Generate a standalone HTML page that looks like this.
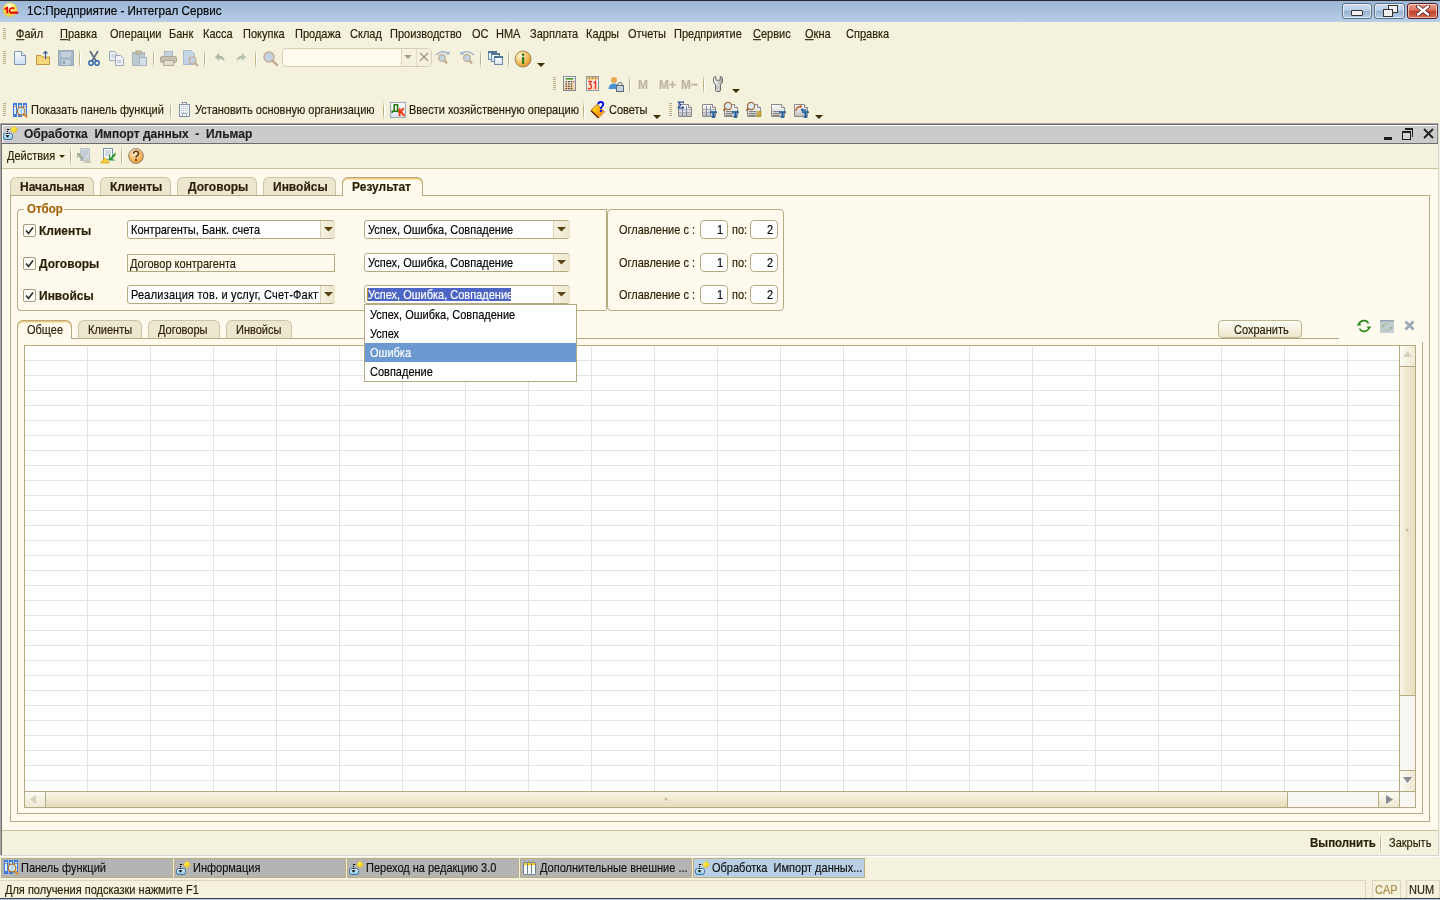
<!DOCTYPE html>
<html><head><meta charset="utf-8"><style>
html,body{margin:0;padding:0;width:1440px;height:900px;overflow:hidden;background:#f4f1dc}
body>div,body>svg{position:absolute;box-sizing:content-box}
body>svg{will-change:transform}
.t{font-family:"Liberation Sans",sans-serif;line-height:14px;white-space:pre;will-change:transform;-webkit-text-stroke:0.15px}
u{text-decoration:underline;text-underline-offset:1px}
</style></head><body>
<div style="left:0px;top:0px;width:1440px;height:900px;background:#f4f1dc"></div>
<div style="left:0px;top:0px;width:1440px;height:1px;background:#2a2a2a"></div>
<div style="left:0px;top:1px;width:1440px;height:21px;background:linear-gradient(#9cb6d6,#b7cee8)"></div>
<svg style="position:absolute;left:2px;top:2px" width="17" height="17" viewBox="0 0 17 17"><defs><radialGradient id="lg" cx="0.45" cy="0.25" r="0.8"><stop offset="0" stop-color="#ffffff"/><stop offset="0.45" stop-color="#f8ec60"/><stop offset="0.75" stop-color="#f0d040"/><stop offset="1" stop-color="#f4d8a0"/></radialGradient></defs><circle cx="8" cy="7.8" r="7.1" fill="url(#lg)" stroke="#d8b860" stroke-width="0.6"/><path d="M2.3 6.5 L4.6 4.8 H6.2 V11.3 H4.3 V7.2 L2.3 7.9 Z" fill="#e80000"/><path d="M12.2 6.8 A2.7 2.7 0 1 0 9.3 11.2" stroke="#e80000" stroke-width="1.7" fill="none"/><rect x="8.8" y="9.6" width="7.5" height="2.1" fill="#e80000"/></svg>
<div class="t" style="left:27px;top:3.95px;font-size:11.7px;font-weight:normal;color:#000;transform-origin:0 11.05px;transform:scaleY(1.1);">1C:Предприятие - Интеграл Сервис</div>
<div style="left:1342px;top:3px;width:28px;height:14px;border:1px solid #5f7189;border-radius:3px;background:linear-gradient(#c9dbef 0%,#bcd0e8 45%,#97b2cf 50%,#b3cbe5 100%);box-shadow:inset 0 0 0 1px rgba(255,255,255,0.6)"></div>
<div style="left:1374px;top:3px;width:29px;height:14px;border:1px solid #5f7189;border-radius:3px;background:linear-gradient(#c9dbef 0%,#bcd0e8 45%,#97b2cf 50%,#b3cbe5 100%);box-shadow:inset 0 0 0 1px rgba(255,255,255,0.6)"></div>
<div style="left:1407px;top:3px;width:29px;height:14px;border:1px solid #5a1a1a;border-radius:3px;background:linear-gradient(#e8a08c 0%,#d9735a 45%,#c0422a 50%,#cf6a50 100%);box-shadow:inset 0 0 0 1px rgba(255,255,255,0.6)"></div>
<div style="left:1351px;top:10px;width:10px;height:4px;background:#f0f0f0;border:1px solid #333;border-radius:1px"></div>
<div style="left:1388px;top:5px;width:8px;height:6px;background:#f0f0f0;border:1px solid #333"></div>
<div style="left:1383px;top:9px;width:8px;height:6px;background:#f0f0f0;border:1px solid #333"></div>
<svg style="position:absolute;left:1416px;top:5px" width="14" height="11" viewBox="0 0 14 11"><path d="M2 1.5 L12 9.5 M12 1.5 L2 9.5" stroke="#5a2020" stroke-width="4" stroke-linecap="round"/><path d="M2 1.5 L12 9.5 M12 1.5 L2 9.5" stroke="#fff" stroke-width="2.4" stroke-linecap="round"/></svg>
<div style="left:3px;top:28px;width:3px;height:1px;background:#b8ae88"></div>
<div style="left:3px;top:30px;width:3px;height:1px;background:#b8ae88"></div>
<div style="left:3px;top:32px;width:3px;height:1px;background:#b8ae88"></div>
<div style="left:3px;top:34px;width:3px;height:1px;background:#b8ae88"></div>
<div style="left:3px;top:36px;width:3px;height:1px;background:#b8ae88"></div>
<div style="left:3px;top:38px;width:3px;height:1px;background:#b8ae88"></div>
<div class="t" style="left:15.5px;top:27.19px;font-size:11px;font-weight:normal;color:#2b2006;transform-origin:0 10.81px;transform:scaleY(1.1);"><u>Ф</u>айл</div>
<div class="t" style="left:59.5px;top:27.19px;font-size:11px;font-weight:normal;color:#2b2006;transform-origin:0 10.81px;transform:scaleY(1.1);"><u>П</u>равка</div>
<div class="t" style="left:109.5px;top:27.19px;font-size:11px;font-weight:normal;color:#2b2006;transform-origin:0 10.81px;transform:scaleY(1.1);">Операции</div>
<div class="t" style="left:168.5px;top:27.19px;font-size:11px;font-weight:normal;color:#2b2006;transform-origin:0 10.81px;transform:scaleY(1.1);">Банк</div>
<div class="t" style="left:202.5px;top:27.19px;font-size:11px;font-weight:normal;color:#2b2006;transform-origin:0 10.81px;transform:scaleY(1.1);">Касса</div>
<div class="t" style="left:242.5px;top:27.19px;font-size:11px;font-weight:normal;color:#2b2006;transform-origin:0 10.81px;transform:scaleY(1.1);">Покупка</div>
<div class="t" style="left:294.5px;top:27.19px;font-size:11px;font-weight:normal;color:#2b2006;transform-origin:0 10.81px;transform:scaleY(1.1);">Продажа</div>
<div class="t" style="left:349.5px;top:27.19px;font-size:11px;font-weight:normal;color:#2b2006;transform-origin:0 10.81px;transform:scaleY(1.1);">Склад</div>
<div class="t" style="left:389.5px;top:27.19px;font-size:11px;font-weight:normal;color:#2b2006;transform-origin:0 10.81px;transform:scaleY(1.1);">Производство</div>
<div class="t" style="left:471.5px;top:27.19px;font-size:11px;font-weight:normal;color:#2b2006;transform-origin:0 10.81px;transform:scaleY(1.1);">ОС</div>
<div class="t" style="left:495.5px;top:27.19px;font-size:11px;font-weight:normal;color:#2b2006;transform-origin:0 10.81px;transform:scaleY(1.1);">НМА</div>
<div class="t" style="left:529.5px;top:27.19px;font-size:11px;font-weight:normal;color:#2b2006;transform-origin:0 10.81px;transform:scaleY(1.1);">Зарплата</div>
<div class="t" style="left:585.5px;top:27.19px;font-size:11px;font-weight:normal;color:#2b2006;transform-origin:0 10.81px;transform:scaleY(1.1);">Кадры</div>
<div class="t" style="left:627.5px;top:27.19px;font-size:11px;font-weight:normal;color:#2b2006;transform-origin:0 10.81px;transform:scaleY(1.1);">Отчеты</div>
<div class="t" style="left:673.5px;top:27.19px;font-size:11px;font-weight:normal;color:#2b2006;transform-origin:0 10.81px;transform:scaleY(1.1);">Предприятие</div>
<div class="t" style="left:752.5px;top:27.19px;font-size:11px;font-weight:normal;color:#2b2006;transform-origin:0 10.81px;transform:scaleY(1.1);"><u>С</u>ервис</div>
<div class="t" style="left:804.5px;top:27.19px;font-size:11px;font-weight:normal;color:#2b2006;transform-origin:0 10.81px;transform:scaleY(1.1);"><u>О</u>кна</div>
<div class="t" style="left:845.5px;top:27.19px;font-size:11px;font-weight:normal;color:#2b2006;transform-origin:0 10.81px;transform:scaleY(1.1);">Сп<u>р</u>авка</div>
<div style="left:3px;top:51px;width:3px;height:1px;background:#b8ae88"></div>
<div style="left:3px;top:53px;width:3px;height:1px;background:#b8ae88"></div>
<div style="left:3px;top:55px;width:3px;height:1px;background:#b8ae88"></div>
<div style="left:3px;top:57px;width:3px;height:1px;background:#b8ae88"></div>
<div style="left:3px;top:59px;width:3px;height:1px;background:#b8ae88"></div>
<div style="left:3px;top:61px;width:3px;height:1px;background:#b8ae88"></div>
<div style="left:3px;top:63px;width:3px;height:1px;background:#b8ae88"></div>
<svg style="position:absolute;left:12px;top:50px" width="16" height="16" viewBox="0 0 16 16"><defs><linearGradient id="ndg" x1="0" y1="0" x2="0.3" y2="1"><stop offset="0" stop-color="#ffffff"/><stop offset="1" stop-color="#cfe0f0"/></linearGradient></defs><path d="M2.5 1.5 H9.5 L13.5 5.5 V14.5 H2.5 Z" fill="url(#ndg)" stroke="#7d97b4"/><path d="M9.5 1.5 V5.5 H13.5" fill="#e4eef8" stroke="#7d97b4"/></svg>
<svg style="position:absolute;left:35px;top:50px" width="16" height="16" viewBox="0 0 16 16"><path d="M1.5 5.5 H6 L7.5 7 H14.5 V14.5 H1.5 Z" fill="#f3d77a" stroke="#c09a3a"/><path d="M10.5 9 V1.5 M8.5 3.5 L10.5 1.5 L12.5 3.5" stroke="#3f6590" stroke-width="1.2" fill="none"/></svg>
<svg style="position:absolute;left:58px;top:50px" width="16" height="16" viewBox="0 0 16 16"><rect x="0.5" y="0.5" width="15" height="15" fill="#a8b8c8" stroke="#9aaabb"/><rect x="3" y="2" width="10" height="5" fill="#c4d0dc"/><rect x="4" y="10" width="8" height="5" fill="#c4d0dc"/><rect x="5" y="11" width="2" height="3" fill="#8e9eb0"/></svg>
<div style="left:79px;top:50px;width:1px;height:18px;background:linear-gradient(rgba(190,178,130,0.1),#bdb287 30%,#bdb287 70%,rgba(190,178,130,0.1))"></div>
<div style="left:80px;top:50px;width:1px;height:18px;background:linear-gradient(rgba(255,255,255,0.2),#ffffff 30%,#ffffff 70%,rgba(255,255,255,0.2))"></div>
<svg style="position:absolute;left:87px;top:50px" width="14" height="16" viewBox="0 0 14 16"><path d="M3 1 L9 11 M11 1 L5 11" stroke="#5a6a7a" stroke-width="1.6"/><circle cx="4" cy="13" r="2.2" fill="none" stroke="#2a62a8" stroke-width="1.4"/><circle cx="10" cy="13" r="2.2" fill="none" stroke="#2a62a8" stroke-width="1.4"/></svg>
<svg style="position:absolute;left:108px;top:50px" width="17" height="16" viewBox="0 0 17 16"><path d="M1.5 1.5 H6.5 L8.5 3.5 V10.5 H1.5 Z" fill="#eef2f8" stroke="#98a8ba"/><path d="M3 5 H7 M3 7 H7" stroke="#b0bccb"/><path d="M7.5 5.5 H12.5 L15.5 8.5 V15.5 H7.5 Z" fill="#f2f6fa" stroke="#98a8ba"/><path d="M9 10.5 H13.5 M9 12.5 H13.5" stroke="#a8b6c6"/></svg>
<svg style="position:absolute;left:131px;top:50px" width="17" height="16" viewBox="0 0 17 16"><rect x="1.5" y="2.5" width="12" height="13" fill="#bcc8d2" stroke="#a7b4c0"/><rect x="5" y="1" width="5" height="3" fill="#c9c4a8" stroke="#a9a488"/><rect x="8.5" y="7.5" width="7" height="8" fill="#d4dee8" stroke="#a7b4c0"/></svg>
<div style="left:153px;top:50px;width:1px;height:18px;background:linear-gradient(rgba(190,178,130,0.1),#bdb287 30%,#bdb287 70%,rgba(190,178,130,0.1))"></div>
<div style="left:154px;top:50px;width:1px;height:18px;background:linear-gradient(rgba(255,255,255,0.2),#ffffff 30%,#ffffff 70%,rgba(255,255,255,0.2))"></div>
<svg style="position:absolute;left:160px;top:50px" width="17" height="16" viewBox="0 0 17 16"><rect x="4.5" y="1.5" width="8" height="5" fill="#c5d3e0" stroke="#a9b6c2"/><rect x="0.5" y="6.5" width="16" height="6" rx="1.5" fill="#c9bfae" stroke="#b0a692"/><rect x="3.5" y="10.5" width="10" height="5" fill="#e2ddd2" stroke="#b0a692"/></svg>
<svg style="position:absolute;left:183px;top:50px" width="16" height="17" viewBox="0 0 16 17"><path d="M0.5 0.5 H8 L11.5 4 V14.5 H0.5 Z" fill="#c5d5e5" stroke="#a9bccf"/><circle cx="9.5" cy="10.5" r="3.5" fill="#c0d0e0" stroke="#c7a88c" stroke-width="1.2"/><path d="M12 13 L15 16" stroke="#c7a88c" stroke-width="2"/></svg>
<div style="left:204px;top:50px;width:1px;height:18px;background:linear-gradient(rgba(190,178,130,0.1),#bdb287 30%,#bdb287 70%,rgba(190,178,130,0.1))"></div>
<div style="left:205px;top:50px;width:1px;height:18px;background:linear-gradient(rgba(255,255,255,0.2),#ffffff 30%,#ffffff 70%,rgba(255,255,255,0.2))"></div>
<svg style="position:absolute;left:214px;top:52px" width="12" height="11" viewBox="0 0 12 11"><path d="M5 1 L1 5 L5 9 V6.5 Q9 6.5 10.5 10 Q10.5 3.5 5 3.5 Z" fill="#a9b7a3"/></svg>
<svg style="position:absolute;left:235px;top:52px" width="12" height="11" viewBox="0 0 12 11"><path d="M7 1 L11 5 L7 9 V6.5 Q3 6.5 1.5 10 Q1.5 3.5 7 3.5 Z" fill="#b6c2b0"/></svg>
<div style="left:255px;top:50px;width:1px;height:18px;background:linear-gradient(rgba(190,178,130,0.1),#bdb287 30%,#bdb287 70%,rgba(190,178,130,0.1))"></div>
<div style="left:256px;top:50px;width:1px;height:18px;background:linear-gradient(rgba(255,255,255,0.2),#ffffff 30%,#ffffff 70%,rgba(255,255,255,0.2))"></div>
<svg style="position:absolute;left:262px;top:50px" width="17" height="17" viewBox="0 0 17 17"><circle cx="7" cy="7" r="5" fill="#c2d2e4" stroke="#c4aa90" stroke-width="1.3"/><path d="M10.5 10.5 L15 15" stroke="#c2a88e" stroke-width="2.4" stroke-linecap="round"/></svg>
<div style="left:282px;top:48px;width:148px;height:17px;border:1px solid #d6cfb0;border-radius:4px;background:#fffbee"></div>
<div style="left:401px;top:49px;width:30px;height:17px;background:#f4f1dc;border-radius:0 3px 3px 0"></div>
<div style="left:401px;top:49px;width:1px;height:17px;background:#ddd6b8"></div>
<div style="left:416px;top:49px;width:1px;height:17px;background:#e4dec4"></div>
<svg style="position:absolute;left:404px;top:55px" width="8" height="5" viewBox="0 0 8 5"><path d="M0 0 H8 L4 4 Z" fill="#a49f8c"/></svg>
<svg style="position:absolute;left:419px;top:52px" width="10" height="10" viewBox="0 0 10 10"><path d="M1 1 L9 9 M9 1 L1 9" stroke="#9b9684" stroke-width="1.3"/></svg>
<svg style="position:absolute;left:435px;top:50px" width="17" height="15" viewBox="0 0 17 15"><path d="M1 5 Q7 -1 14 4" stroke="#9fb5cf" stroke-width="1.6" fill="none"/><path d="M11 5 L15 4 L14 1" fill="#9fb5cf"/><circle cx="7" cy="8" r="3.4" fill="#c4d2e2" stroke="#c4aa90" stroke-width="1.1"/><path d="M9.5 10.5 L12 13.5" stroke="#c2a88e" stroke-width="2"/></svg>
<svg style="position:absolute;left:458px;top:50px" width="17" height="15" viewBox="0 0 17 15"><path d="M3 4 Q10 -1 16 5" stroke="#9fb5cf" stroke-width="1.6" fill="none"/><path d="M6 5 L2 4 L3 1" fill="#9fb5cf"/><circle cx="9" cy="8" r="3.4" fill="#c4d2e2" stroke="#c4aa90" stroke-width="1.1"/><path d="M11.5 10.5 L14 13.5" stroke="#c2a88e" stroke-width="2"/></svg>
<div style="left:480px;top:50px;width:1px;height:18px;background:linear-gradient(rgba(190,178,130,0.1),#bdb287 30%,#bdb287 70%,rgba(190,178,130,0.1))"></div>
<div style="left:481px;top:50px;width:1px;height:18px;background:linear-gradient(rgba(255,255,255,0.2),#ffffff 30%,#ffffff 70%,rgba(255,255,255,0.2))"></div>
<svg style="position:absolute;left:488px;top:50px" width="16" height="16" viewBox="0 0 16 16"><defs><linearGradient id="wng" x1="0" y1="0" x2="0" y2="1"><stop offset="0" stop-color="#ffffff"/><stop offset="1" stop-color="#d4e2f0"/></linearGradient></defs><rect x="0.5" y="1.5" width="8" height="8" fill="url(#wng)" stroke="#6a8aa8"/><rect x="0" y="1" width="9" height="2" fill="#4f7699"/><rect x="3.5" y="3.5" width="8" height="8" fill="url(#wng)" stroke="#6a8aa8"/><rect x="3" y="3" width="9" height="2" fill="#4f7699"/><rect x="6.5" y="6.5" width="8" height="8" fill="url(#wng)" stroke="#6a8aa8"/><rect x="6" y="6" width="9" height="2" fill="#4f7699"/></svg>
<div style="left:508px;top:50px;width:1px;height:18px;background:linear-gradient(rgba(190,178,130,0.1),#bdb287 30%,#bdb287 70%,rgba(190,178,130,0.1))"></div>
<div style="left:509px;top:50px;width:1px;height:18px;background:linear-gradient(rgba(255,255,255,0.2),#ffffff 30%,#ffffff 70%,rgba(255,255,255,0.2))"></div>
<svg style="position:absolute;left:514px;top:50px" width="18" height="18" viewBox="0 0 18 18"><defs><radialGradient id="ig" cx="0.35" cy="0.3" r="0.75"><stop offset="0" stop-color="#fff6d8"/><stop offset="0.7" stop-color="#f2b34c"/><stop offset="1" stop-color="#d98a20"/></radialGradient></defs><circle cx="9" cy="9" r="8" fill="url(#ig)" stroke="#8a7a5a" stroke-width="0.8"/><rect x="8" y="7" width="2.2" height="7" fill="#2f7a1f"/><circle cx="9.1" cy="4.8" r="1.3" fill="#2f7a1f"/></svg>
<svg style="position:absolute;left:537px;top:63px" width="8" height="5" viewBox="0 0 8 5"><path d="M0 0 H8 L4 4 Z" fill="#3d2e06"/></svg>
<div style="left:553px;top:77px;width:3px;height:1px;background:#b8ae88"></div>
<div style="left:553px;top:79px;width:3px;height:1px;background:#b8ae88"></div>
<div style="left:553px;top:81px;width:3px;height:1px;background:#b8ae88"></div>
<div style="left:553px;top:83px;width:3px;height:1px;background:#b8ae88"></div>
<div style="left:553px;top:85px;width:3px;height:1px;background:#b8ae88"></div>
<div style="left:553px;top:87px;width:3px;height:1px;background:#b8ae88"></div>
<div style="left:553px;top:89px;width:3px;height:1px;background:#b8ae88"></div>
<svg style="position:absolute;left:563px;top:76px" width="13" height="15" viewBox="0 0 13 15"><defs><linearGradient id="cg" x1="0" y1="0" x2="0" y2="1"><stop offset="0" stop-color="#ffffff"/><stop offset="1" stop-color="#f7c890"/></linearGradient></defs><rect x="0.5" y="0.5" width="12" height="14" fill="url(#cg)" stroke="#7c8c9c"/><rect x="2.5" y="2" width="8" height="1.6" fill="#3f9a2a"/><rect x="2.5" y="5.0" width="1.6" height="1.2" fill="#3a3a3a"/><rect x="2.5" y="7.3" width="1.6" height="1.2" fill="#3a3a3a"/><rect x="2.5" y="9.6" width="1.6" height="1.2" fill="#3a3a3a"/><rect x="2.5" y="11.899999999999999" width="1.6" height="1.2" fill="#3a3a3a"/><rect x="5.1" y="5.0" width="1.6" height="1.2" fill="#3a3a3a"/><rect x="5.1" y="7.3" width="1.6" height="1.2" fill="#3a3a3a"/><rect x="5.1" y="9.6" width="1.6" height="1.2" fill="#3a3a3a"/><rect x="5.1" y="11.899999999999999" width="1.6" height="1.2" fill="#3a3a3a"/><rect x="7.7" y="5.0" width="1.6" height="1.2" fill="#3a3a3a"/><rect x="7.7" y="7.3" width="1.6" height="1.2" fill="#3a3a3a"/><rect x="7.7" y="9.6" width="1.6" height="1.2" fill="#3a3a3a"/><rect x="7.7" y="11.899999999999999" width="1.6" height="1.2" fill="#3a3a3a"/><rect x="10.2" y="5" width="1" height="1.5" fill="#e02020"/></svg>
<svg style="position:absolute;left:586px;top:76px" width="13" height="15" viewBox="0 0 13 15"><defs><linearGradient id="clg" x1="0" y1="0" x2="0" y2="1"><stop offset="0" stop-color="#ffffff"/><stop offset="1" stop-color="#fbd8b8"/></linearGradient></defs><rect x="0.5" y="0.5" width="12" height="14" fill="url(#clg)" stroke="#8a98a6"/><rect x="1" y="1" width="11" height="2.6" fill="#f2c070"/><path d="M3 2.3 H4 M6 2.3 H7 M9 2.3 H10" stroke="#7a4a20"/><path d="M2.2 5.5 H5.3 L3.8 8 Q5.5 8.3 5.5 10.3 Q5.5 12.8 3.6 12.8 Q2.4 12.8 2 12" stroke="#e83020" stroke-width="1.3" fill="none"/><path d="M7.6 7 L9.5 5.5 V13" stroke="#e83020" stroke-width="1.4" fill="none"/></svg>
<svg style="position:absolute;left:608px;top:76px" width="16" height="16" viewBox="0 0 16 16"><circle cx="6" cy="4" r="3" fill="#e8a850"/><path d="M0.5 13 Q1 7.5 6 7.5 Q10 7.5 10 11 V13 Z" fill="#4a90d0"/><rect x="8.5" y="9.5" width="7" height="6" fill="#c8d2dc" stroke="#5a6a7a"/><path d="M10 9.5 V7.5 Q12 5 14 7.5 V9.5" stroke="#5a6a7a" fill="none"/></svg>
<div style="left:629px;top:76px;width:1px;height:18px;background:linear-gradient(rgba(190,178,130,0.1),#bdb287 30%,#bdb287 70%,rgba(190,178,130,0.1))"></div>
<div style="left:630px;top:76px;width:1px;height:18px;background:linear-gradient(rgba(255,255,255,0.2),#ffffff 30%,#ffffff 70%,rgba(255,255,255,0.2))"></div>
<div class="t" style="left:638px;top:77.84px;font-size:12px;font-weight:bold;color:#bdb4a3;transform-origin:0 11.16px;transform:scaleY(1.1);">M</div>
<div class="t" style="left:659px;top:77.84px;font-size:12px;font-weight:bold;color:#bdb4a3;transform-origin:0 11.16px;transform:scaleY(1.1);">M+</div>
<div class="t" style="left:681px;top:77.84px;font-size:12px;font-weight:bold;color:#bdb4a3;transform-origin:0 11.16px;transform:scaleY(1.1);">M−</div>
<div style="left:703px;top:76px;width:1px;height:18px;background:linear-gradient(rgba(190,178,130,0.1),#bdb287 30%,#bdb287 70%,rgba(190,178,130,0.1))"></div>
<div style="left:704px;top:76px;width:1px;height:18px;background:linear-gradient(rgba(255,255,255,0.2),#ffffff 30%,#ffffff 70%,rgba(255,255,255,0.2))"></div>
<svg style="position:absolute;left:713px;top:76px" width="10" height="17" viewBox="0 0 10 17"><defs><linearGradient id="wg" x1="0" x2="1"><stop offset="0" stop-color="#ffffff"/><stop offset="1" stop-color="#a8a8a8"/></linearGradient></defs><path d="M0.5 3 Q0.5 0.5 2.8 0.5 V4.2 H7.2 V0.5 Q9.5 0.5 9.5 3 V5 Q9.5 7.5 7.5 8.5 V14.5 Q7.5 15.5 6 15.5 H4 Q2.5 15.5 2.5 14.5 V8.5 Q0.5 7.5 0.5 5 Z" fill="url(#wg)" stroke="#6e6e6e" stroke-width="1"/><path d="M4 10 V13.5" stroke="#b8b8b8" stroke-width="1.5"/></svg>
<svg style="position:absolute;left:732px;top:89px" width="8" height="5" viewBox="0 0 8 5"><path d="M0 0 H8 L4 4 Z" fill="#3d2e06"/></svg>
<div style="left:3px;top:103px;width:3px;height:1px;background:#b8ae88"></div>
<div style="left:3px;top:105px;width:3px;height:1px;background:#b8ae88"></div>
<div style="left:3px;top:107px;width:3px;height:1px;background:#b8ae88"></div>
<div style="left:3px;top:109px;width:3px;height:1px;background:#b8ae88"></div>
<div style="left:3px;top:111px;width:3px;height:1px;background:#b8ae88"></div>
<div style="left:3px;top:113px;width:3px;height:1px;background:#b8ae88"></div>
<div style="left:3px;top:115px;width:3px;height:1px;background:#b8ae88"></div>
<svg style="position:absolute;left:12px;top:102px" width="17" height="17" viewBox="0 0 17 17"><rect x="1" y="1" width="4" height="14" fill="#3b7be0"/><rect x="2" y="3" width="2" height="9" fill="#d8f2ff"/><rect x="6" y="1" width="4" height="14" fill="#3b7be0"/><rect x="7" y="3" width="2" height="9" fill="#d8f2ff"/><rect x="11" y="1" width="4" height="13" fill="#3b7be0"/><rect x="12" y="3" width="2" height="9" fill="#d8f2ff"/><path d="M2 4.5 H4 M12 4.5 H14" stroke="#e07040" stroke-width="0.9"/><circle cx="9" cy="9" r="3.8" fill="#d0ecff" stroke="#b8782a" stroke-width="1.3"/><path d="M9.3 6 V11.5" stroke="#8ab8e8" stroke-width="0.8"/><path d="M12 12 L15.2 15.2" stroke="#e08a30" stroke-width="2.2"/></svg>
<div class="t" style="left:30.5px;top:103.19px;font-size:11px;font-weight:normal;color:#2b2006;transform-origin:0 10.81px;transform:scaleY(1.1);">Показать панель функций</div>
<div style="left:170px;top:102px;width:1px;height:18px;background:linear-gradient(rgba(190,178,130,0.1),#bdb287 30%,#bdb287 70%,rgba(190,178,130,0.1))"></div>
<div style="left:171px;top:102px;width:1px;height:18px;background:linear-gradient(rgba(255,255,255,0.2),#ffffff 30%,#ffffff 70%,rgba(255,255,255,0.2))"></div>
<svg style="position:absolute;left:178px;top:101px" width="13" height="17" viewBox="0 0 13 17"><rect x="1.5" y="3.5" width="10" height="12" fill="#f6f8fc" stroke="#7f90aa"/><rect x="4.5" y="1.5" width="4" height="2" fill="#fff" stroke="#7f90aa"/><rect x="3" y="5" width="1" height="1" fill="#b0bed2"/><rect x="3" y="7" width="1" height="1" fill="#b0bed2"/><rect x="3" y="9" width="1" height="1" fill="#b0bed2"/><rect x="3" y="11" width="1" height="1" fill="#b0bed2"/><rect x="5" y="5" width="1" height="1" fill="#b0bed2"/><rect x="5" y="7" width="1" height="1" fill="#b0bed2"/><rect x="5" y="9" width="1" height="1" fill="#b0bed2"/><rect x="5" y="11" width="1" height="1" fill="#b0bed2"/><rect x="7" y="5" width="1" height="1" fill="#b0bed2"/><rect x="7" y="7" width="1" height="1" fill="#b0bed2"/><rect x="7" y="9" width="1" height="1" fill="#b0bed2"/><rect x="7" y="11" width="1" height="1" fill="#b0bed2"/><rect x="9" y="5" width="1" height="1" fill="#b0bed2"/><rect x="9" y="7" width="1" height="1" fill="#b0bed2"/><rect x="9" y="9" width="1" height="1" fill="#b0bed2"/><rect x="9" y="11" width="1" height="1" fill="#b0bed2"/><path d="M4.5 15 V12.5 H8.5 V15" stroke="#9aa8bc" fill="none"/></svg>
<div class="t" style="left:195px;top:103.19px;font-size:11px;font-weight:normal;color:#2b2006;transform-origin:0 10.81px;transform:scaleY(1.1);">Установить основную организацию</div>
<div style="left:383px;top:102px;width:1px;height:18px;background:linear-gradient(rgba(190,178,130,0.1),#bdb287 30%,#bdb287 70%,rgba(190,178,130,0.1))"></div>
<div style="left:384px;top:102px;width:1px;height:18px;background:linear-gradient(rgba(255,255,255,0.2),#ffffff 30%,#ffffff 70%,rgba(255,255,255,0.2))"></div>
<svg style="position:absolute;left:389px;top:101px" width="18" height="18" viewBox="0 0 18 18"><defs><linearGradient id="dkg" x1="0" y1="0" x2="0" y2="1"><stop offset="0" stop-color="#ffffff"/><stop offset="1" stop-color="#d8e6f2"/></linearGradient></defs><rect x="1.5" y="1.5" width="15" height="15" fill="url(#dkg)" stroke="#a6b0ba" stroke-width="1.2"/><path d="M5.2 3.8 V10 M8.6 3.8 V10 M4.6 3.8 H9.2 M2.6 10.3 H10.6 M3.2 10 V12 M10 10 V12" stroke="#2a7a10" stroke-width="1.6" fill="none"/><path d="M10.6 7.2 V15.2 M10.8 11.3 L14.8 7.2 M11.8 10.6 L15.6 15.2" stroke="#f03a10" stroke-width="2" fill="none"/></svg>
<div class="t" style="left:408.5px;top:103.19px;font-size:11px;font-weight:normal;color:#2b2006;transform-origin:0 10.81px;transform:scaleY(1.1);">Ввести хозяйственную операцию</div>
<div style="left:583px;top:102px;width:1px;height:18px;background:linear-gradient(rgba(190,178,130,0.1),#bdb287 30%,#bdb287 70%,rgba(190,178,130,0.1))"></div>
<div style="left:584px;top:102px;width:1px;height:18px;background:linear-gradient(rgba(255,255,255,0.2),#ffffff 30%,#ffffff 70%,rgba(255,255,255,0.2))"></div>
<svg style="position:absolute;left:590px;top:101px" width="16" height="18" viewBox="0 0 16 18"><defs><linearGradient id="bk" x1="0" y1="0" x2="1" y2="1"><stop offset="0" stop-color="#ffff20"/><stop offset="0.5" stop-color="#ffb010"/><stop offset="1" stop-color="#ff6a10"/></linearGradient></defs><path d="M1 9.5 L7 3.5 L14.5 11 L8.5 17 Z" fill="url(#bk)" stroke="#b04a08" stroke-width="0.9"/><path d="M1.2 9.8 L8.3 16.8" stroke="#5a2000" stroke-width="1.4"/><path d="M9.5 15.8 L14 11.3" stroke="#fff" stroke-width="1" stroke-dasharray="1 0.8"/><path d="M8.2 3.3 Q8.5 1 10.8 1 Q13.2 1 13.2 3.3 Q13.2 4.8 11.8 5.7 Q10.9 6.3 10.9 8" stroke="#0010f0" stroke-width="1.9" fill="none"/><rect x="9.9" y="9" width="2" height="2" fill="#0010f0"/></svg>
<div class="t" style="left:608.5px;top:103.19px;font-size:11px;font-weight:normal;color:#2b2006;transform-origin:0 10.81px;transform:scaleY(1.1);">Советы</div>
<svg style="position:absolute;left:653px;top:115px" width="8" height="5" viewBox="0 0 8 5"><path d="M0 0 H8 L4 4 Z" fill="#3d2e06"/></svg>
<div style="left:669px;top:103px;width:3px;height:1px;background:#b8ae88"></div>
<div style="left:669px;top:105px;width:3px;height:1px;background:#b8ae88"></div>
<div style="left:669px;top:107px;width:3px;height:1px;background:#b8ae88"></div>
<div style="left:669px;top:109px;width:3px;height:1px;background:#b8ae88"></div>
<div style="left:669px;top:111px;width:3px;height:1px;background:#b8ae88"></div>
<div style="left:669px;top:113px;width:3px;height:1px;background:#b8ae88"></div>
<div style="left:669px;top:115px;width:3px;height:1px;background:#b8ae88"></div>
<svg style="position:absolute;left:677px;top:101px" width="17" height="17" viewBox="0 0 17 17"><defs><linearGradient id="rg" x1="0" y1="0" x2="0" y2="1"><stop offset="0" stop-color="#fafafa"/><stop offset="0.45" stop-color="#e8e8e8"/><stop offset="1" stop-color="#b8b8b8"/></linearGradient></defs><path d="M1.5 3.5 H11.5 L14.5 6.5 V15.5 H1.5 Z" fill="url(#rg)" stroke="#8a8a8a"/><path d="M11.5 3.5 V6.5 H14.5" fill="#fff" stroke="#8a8a8a"/><path d="M5.5 5 V15 M9.5 5 V15" stroke="#6a7ab8" stroke-width="0.9"/><path d="M2 8.5 H14 M2 11.5 H14" stroke="#a0a0a0" stroke-width="0.8"/><path d="M0.5 0.5 H7 V2.5 H6.3 V1.7 H2.6 L4.6 4 L2.4 6.3 H6.3 V5.5 H7 V7.5 H0.5 V7 L3 4 L0.5 1 Z" fill="#1a4a9a"/></svg>
<svg style="position:absolute;left:701px;top:101px" width="17" height="17" viewBox="0 0 17 17"><defs><linearGradient id="rg" x1="0" y1="0" x2="0" y2="1"><stop offset="0" stop-color="#fafafa"/><stop offset="0.45" stop-color="#e8e8e8"/><stop offset="1" stop-color="#b8b8b8"/></linearGradient></defs><path d="M1.5 3.5 H11.5 L14.5 6.5 V15.5 H1.5 Z" fill="url(#rg)" stroke="#8a8a8a"/><path d="M11.5 3.5 V6.5 H14.5" fill="#fff" stroke="#8a8a8a"/><path d="M5.5 5 V15 M9.5 5 V15" stroke="#6a7ab8" stroke-width="0.9"/><path d="M2 8.5 H14 M2 11.5 H14" stroke="#a0a0a0" stroke-width="0.8"/><path d="M9.5 10.5 H15.5 V12 H15 V11.5 H13.2 V16 H14 V16.8 H11 V16 H11.8 V11.5 H10 V12 H9.5 Z" fill="#1a5c9c" stroke="#1a5c9c" stroke-width="0.6"/></svg>
<svg style="position:absolute;left:723px;top:101px" width="17" height="17" viewBox="0 0 17 17"><defs><linearGradient id="rg" x1="0" y1="0" x2="0" y2="1"><stop offset="0" stop-color="#fafafa"/><stop offset="0.45" stop-color="#e8e8e8"/><stop offset="1" stop-color="#b8b8b8"/></linearGradient></defs><path d="M1.5 3.5 H11.5 L14.5 6.5 V15.5 H1.5 Z" fill="url(#rg)" stroke="#8a8a8a"/><path d="M11.5 3.5 V6.5 H14.5" fill="#fff" stroke="#8a8a8a"/><path d="M3 10.5 H10 M3 12.5 H10 M3 14.5 H9" stroke="#7a7a7a" stroke-width="0.9"/><circle cx="5" cy="5" r="3.6" fill="#dcecf8" stroke="#a86a3a" stroke-width="1.2"/><path d="M2.4 7.6 L0.3 9.7" stroke="#a86a3a" stroke-width="1.8"/><path d="M9.5 10.5 H15.5 V12 H15 V11.5 H13.2 V16 H14 V16.8 H11 V16 H11.8 V11.5 H10 V12 H9.5 Z" fill="#1a5c9c" stroke="#1a5c9c" stroke-width="0.6"/></svg>
<svg style="position:absolute;left:746px;top:101px" width="17" height="17" viewBox="0 0 17 17"><defs><linearGradient id="rg" x1="0" y1="0" x2="0" y2="1"><stop offset="0" stop-color="#fafafa"/><stop offset="0.45" stop-color="#e8e8e8"/><stop offset="1" stop-color="#b8b8b8"/></linearGradient></defs><path d="M1.5 3.5 H11.5 L14.5 6.5 V15.5 H1.5 Z" fill="url(#rg)" stroke="#8a8a8a"/><path d="M11.5 3.5 V6.5 H14.5" fill="#fff" stroke="#8a8a8a"/><path d="M3 10.5 H10 M3 12.5 H10 M3 14.5 H9" stroke="#7a7a7a" stroke-width="0.9"/><circle cx="5" cy="5" r="3.6" fill="#dcecf8" stroke="#a86a3a" stroke-width="1.2"/><path d="M2.4 7.6 L0.3 9.7" stroke="#a86a3a" stroke-width="1.8"/><path d="M10.5 11 H15.5 M10.5 13 H15.5 M10.5 15 H15.5" stroke="#c89a20" stroke-width="1.3"/></svg>
<svg style="position:absolute;left:770px;top:101px" width="17" height="17" viewBox="0 0 17 17"><defs><linearGradient id="rg" x1="0" y1="0" x2="0" y2="1"><stop offset="0" stop-color="#fafafa"/><stop offset="0.45" stop-color="#e8e8e8"/><stop offset="1" stop-color="#b8b8b8"/></linearGradient></defs><path d="M1.5 3.5 H11.5 L14.5 6.5 V15.5 H1.5 Z" fill="url(#rg)" stroke="#8a8a8a"/><path d="M11.5 3.5 V6.5 H14.5" fill="#fff" stroke="#8a8a8a"/><path d="M3 10.5 H10 M3 12.5 H10 M3 14.5 H9" stroke="#7a7a7a" stroke-width="0.9"/><path d="M9.5 10.5 H15.5 V12 H15 V11.5 H13.2 V16 H14 V16.8 H11 V16 H11.8 V11.5 H10 V12 H9.5 Z" fill="#1a5c9c" stroke="#1a5c9c" stroke-width="0.6"/></svg>
<svg style="position:absolute;left:793px;top:101px" width="17" height="17" viewBox="0 0 17 17"><defs><linearGradient id="rg" x1="0" y1="0" x2="0" y2="1"><stop offset="0" stop-color="#fafafa"/><stop offset="0.45" stop-color="#e8e8e8"/><stop offset="1" stop-color="#b8b8b8"/></linearGradient></defs><path d="M1.5 3.5 H11.5 L14.5 6.5 V15.5 H1.5 Z" fill="url(#rg)" stroke="#8a8a8a"/><path d="M11.5 3.5 V6.5 H14.5" fill="#fff" stroke="#8a8a8a"/><path d="M3 10 Q3.5 5.5 8 5.5" stroke="#c06a30" stroke-width="1.6" fill="none"/><path d="M7 3.5 L9.5 5.5 L7 7.5 Z" fill="#c06a30"/><path d="M13.5 9 H8.5" stroke="#1a5c9c" stroke-width="1.4"/><path d="M10 7 L7.5 9 L10 11 Z" fill="#1a5c9c"/><path d="M9.5 10.5 H15.5 V12 H15 V11.5 H13.2 V16 H14 V16.8 H11 V16 H11.8 V11.5 H10 V12 H9.5 Z" fill="#1a5c9c" stroke="#1a5c9c" stroke-width="0.6"/></svg>
<svg style="position:absolute;left:815px;top:115px" width="8" height="5" viewBox="0 0 8 5"><path d="M0 0 H8 L4 4 Z" fill="#3d2e06"/></svg>
<div style="left:0px;top:123px;width:1439px;height:1px;background:#a7a7a7"></div>
<div style="left:1px;top:124px;width:1437px;height:1px;background:#6c6c6c"></div>
<div style="left:0px;top:123px;width:1px;height:733px;background:#a7a7a7"></div>
<div style="left:1px;top:124px;width:1px;height:732px;background:#6c6c6c"></div>
<div style="left:1438px;top:123px;width:1px;height:733px;background:#d6d6d6"></div>
<div style="left:2px;top:125px;width:1435px;height:18px;background:#cbcbcb"></div>
<div style="left:2px;top:125px;width:1435px;height:1px;background:#ffffff"></div>
<div style="left:2px;top:125px;width:1px;height:18px;background:#ffffff"></div>
<div style="left:1437px;top:125px;width:1px;height:18px;background:#8a8a8a"></div>
<div style="left:2px;top:143px;width:1436px;height:1px;background:#6c6c6c"></div>
<svg style="position:absolute;left:3px;top:125px" width="16" height="16" viewBox="0 0 16 16"><defs><linearGradient id="pbg" x1="0" y1="0" x2="0" y2="1"><stop offset="0" stop-color="#e4f8ff"/><stop offset="1" stop-color="#88c4ea"/></linearGradient><linearGradient id="pdg" x1="0" y1="0" x2="1" y2="1"><stop offset="0" stop-color="#fffbb0"/><stop offset="0.5" stop-color="#f8e030"/><stop offset="1" stop-color="#e8c020"/></linearGradient></defs><rect x="0.5" y="8.5" width="9" height="6" rx="2" fill="url(#pbg)" stroke="#3f6f95"/><path d="M4.5 4 V10" stroke="#000" stroke-width="1.1" stroke-dasharray="1.1 0.9"/><path d="M5 4.5 H8" stroke="#000" stroke-width="1.1" stroke-dasharray="1.1 0.9"/><path d="M2.3 10.2 H6.7 L4.5 12.6 Z" fill="#000"/><path d="M11 0.8 L14.7 4.5 L11 8.2 L7.3 4.5 Z" fill="url(#pdg)" stroke="#d8b030" stroke-width="0.6"/></svg>
<div class="t" style="left:23.5px;top:126.84px;font-size:12px;font-weight:bold;color:#1e1e1e;transform-origin:0 11.16px;transform:scaleY(1.1);">Обработка&nbsp; Импорт данных&nbsp; -&nbsp; Ильмар</div>
<div style="left:1384px;top:137px;width:8px;height:3px;background:#1e1e1e"></div>
<div style="left:1402px;top:131px;width:7px;height:6px;border:1px solid #1e1e1e;border-top-width:2px;background:#cbcbcb"></div>
<div style="left:1405px;top:128px;width:7px;height:7px;border:1px solid #1e1e1e;border-top-width:2px;border-bottom:none;border-left:none"></div>
<div style="left:1402px;top:131px;width:7px;height:6px;border:1px solid #1e1e1e;border-top-width:2px;background:#d4d4d4"></div>
<svg style="position:absolute;left:1423px;top:128px" width="11" height="11" viewBox="0 0 11 11"><path d="M1 1 L10 10 M10 1 L1 10" stroke="#1e1e1e" stroke-width="1.8"/></svg>
<div class="t" style="left:7px;top:149.19px;font-size:11px;font-weight:normal;color:#2b2006;transform-origin:0 10.81px;transform:scaleY(1.1);">Действия</div>
<svg style="position:absolute;left:59px;top:155px" width="6" height="4" viewBox="0 0 6 4"><path d="M0 0 H6 L3 3 Z" fill="#3d2e06"/></svg>
<div style="left:70px;top:147px;width:1px;height:19px;background:linear-gradient(rgba(190,178,130,0.1),#bdb287 30%,#bdb287 70%,rgba(190,178,130,0.1))"></div>
<div style="left:71px;top:147px;width:1px;height:19px;background:linear-gradient(rgba(255,255,255,0.2),#ffffff 30%,#ffffff 70%,rgba(255,255,255,0.2))"></div>
<svg style="position:absolute;left:76px;top:147px" width="17" height="17" viewBox="0 0 17 17"><rect x="4.5" y="1.5" width="9" height="12" fill="#d6dde4" stroke="#b8c2cc"/><path d="M6 4 H12 M6 6 H12 M6 8 H12 M6 10 H10" stroke="#aeb8c4" stroke-width="0.9"/><path d="M1 6 H6 L4.5 7.5 L8.5 11.5 L6.5 13.5 L2.5 9.5 L1 11 Z" fill="#a3b3a0"/><path d="M7 16 L11.5 10 L16 16 Z" fill="#cbc8b8"/></svg>
<svg style="position:absolute;left:100px;top:147px" width="17" height="17" viewBox="0 0 17 17"><rect x="3.5" y="1.5" width="9" height="11" fill="#fafcfe" stroke="#7d96b0"/><path d="M5 4 H11 M5 6 H11 M5 8 H11" stroke="#9fb0c4" stroke-width="0.9"/><path d="M0.5 16 L5 10.5 L9.5 16 Z" fill="#f2cf3a" stroke="#d8a820" stroke-width="0.7"/><path d="M15.5 5 V8.5 L11.5 12.5 H14.5 L15.5 13.5 H9 V7 L10 8 V11 L14 7 Z" fill="#2a9a2a"/></svg>
<div style="left:121px;top:147px;width:1px;height:19px;background:linear-gradient(rgba(190,178,130,0.1),#bdb287 30%,#bdb287 70%,rgba(190,178,130,0.1))"></div>
<div style="left:122px;top:147px;width:1px;height:19px;background:linear-gradient(rgba(255,255,255,0.2),#ffffff 30%,#ffffff 70%,rgba(255,255,255,0.2))"></div>
<svg style="position:absolute;left:128px;top:148px" width="16" height="16" viewBox="0 0 16 16"><defs><radialGradient id="hg" cx="0.4" cy="0.3" r="0.75"><stop offset="0" stop-color="#fff4dc"/><stop offset="0.65" stop-color="#f5b45a"/><stop offset="1" stop-color="#e8962e"/></radialGradient></defs><circle cx="8" cy="8" r="7.4" fill="url(#hg)" stroke="#8a8070" stroke-width="0.9"/><path d="M5.5 5.8 Q5.6 3.3 8 3.3 Q10.6 3.3 10.6 5.6 Q10.6 7 9 7.8 Q8 8.3 8 9.8" stroke="#6a4018" stroke-width="1.6" fill="none"/><rect x="7.1" y="11" width="1.9" height="1.9" fill="#6a4018"/></svg>
<div style="left:2px;top:168px;width:1436px;height:1px;background:#c9c09a"></div>
<div style="left:2px;top:169px;width:1436px;height:661px;background:#fefaee"></div>
<div style="left:2px;top:830px;width:1436px;height:1px;background:#c9c09a"></div>
<div class="t" style="left:1309.5px;top:836.02px;font-size:11.5px;font-weight:bold;color:#2b2006;transform-origin:0 10.98px;transform:scaleY(1.1);">Выполнить</div>
<div style="left:1380px;top:835px;width:1px;height:18px;background:linear-gradient(rgba(190,178,130,0.1),#bdb287 30%,#bdb287 70%,rgba(190,178,130,0.1))"></div>
<div style="left:1381px;top:835px;width:1px;height:18px;background:linear-gradient(rgba(255,255,255,0.2),#ffffff 30%,#ffffff 70%,rgba(255,255,255,0.2))"></div>
<div class="t" style="left:1388.5px;top:836.19px;font-size:11px;font-weight:normal;color:#2b2006;transform-origin:0 10.81px;transform:scaleY(1.1);">Закрыть</div>
<div style="left:10px;top:195px;width:1418px;height:625px;border:1px solid #b4aa82"></div>
<div style="left:10px;top:177px;width:82px;height:17px;border:1px solid #cbc4a4;border-bottom:none;border-radius:6px 6px 0 0;background:#ede7cf;z-index:2"></div>
<div class="t" style="left:20px;top:179.84px;font-size:12px;font-weight:bold;color:#2b2006;transform-origin:0 11.16px;transform:scaleY(1.1);z-index:3">Начальная</div>
<div style="left:100px;top:177px;width:69px;height:17px;border:1px solid #cbc4a4;border-bottom:none;border-radius:6px 6px 0 0;background:#ede7cf;z-index:2"></div>
<div class="t" style="left:110px;top:179.84px;font-size:12px;font-weight:bold;color:#2b2006;transform-origin:0 11.16px;transform:scaleY(1.1);z-index:3">Клиенты</div>
<div style="left:177px;top:177px;width:78px;height:17px;border:1px solid #cbc4a4;border-bottom:none;border-radius:6px 6px 0 0;background:#ede7cf;z-index:2"></div>
<div class="t" style="left:187.5px;top:179.84px;font-size:12px;font-weight:bold;color:#2b2006;transform-origin:0 11.16px;transform:scaleY(1.1);z-index:3">Договоры</div>
<div style="left:263px;top:177px;width:71px;height:17px;border:1px solid #cbc4a4;border-bottom:none;border-radius:6px 6px 0 0;background:#ede7cf;z-index:2"></div>
<div class="t" style="left:273px;top:179.84px;font-size:12px;font-weight:bold;color:#2b2006;transform-origin:0 11.16px;transform:scaleY(1.1);z-index:3">Инвойсы</div>
<div style="left:342px;top:177px;width:79px;height:18px;border:1px solid #b4aa82;border-bottom:none;border-radius:6px 6px 0 0;background:#fefaee;box-shadow:inset 0 1px 0 #f6c978,inset 0 2px 0 #fbe3b0;z-index:2"></div>
<div class="t" style="left:352px;top:179.84px;font-size:12px;font-weight:bold;color:#2b2006;transform-origin:0 11.16px;transform:scaleY(1.1);z-index:3">Результат</div>
<div style="left:17px;top:209px;width:588px;height:100px;border:1px solid #b4aa82;border-radius:4px 0 0 4px;border-right:none"></div>
<div style="left:607px;top:209px;width:175px;height:100px;border:1px solid #b4aa82;border-radius:4px"></div>
<div style="left:606px;top:209px;width:1px;height:101px;background:#b4aa82"></div>
<div style="left:24px;top:205px;width:40px;height:8px;background:#fefaee"></div>
<div class="t" style="left:27px;top:202.02px;font-size:11.5px;font-weight:bold;color:#a0620a;transform-origin:0 10.98px;transform:scaleY(1.1);">Отбор</div>
<div style="left:23px;top:224px;width:11px;height:11px;border:1px solid #a49c7c;border-radius:2px;background:#fdfcf6"></div>
<svg style="position:absolute;left:25px;top:226px" width="9" height="9" viewBox="0 0 9 9"><path d="M1 4.5 L3.5 7.5 L8 1.5" stroke="#2a2a2a" stroke-width="1.6" fill="none"/></svg>
<div class="t" style="left:38.5px;top:223.84px;font-size:12px;font-weight:bold;color:#2b2006;transform-origin:0 11.16px;transform:scaleY(1.1);">Клиенты</div>
<div class="t" style="left:619px;top:223.19px;font-size:11px;font-weight:normal;color:#2b2006;transform-origin:0 10.81px;transform:scaleY(1.1);">Оглавление с :</div>
<div style="left:700px;top:220px;width:26px;height:17px;border:1px solid #b4aa82;border-radius:4px;background:#fff"></div>
<div class="t" style="left:716.5px;top:223.19px;font-size:11px;font-weight:normal;color:#000;transform-origin:0 10.81px;transform:scaleY(1.1);">1</div>
<div class="t" style="left:731.5px;top:223.19px;font-size:11px;font-weight:normal;color:#2b2006;transform-origin:0 10.81px;transform:scaleY(1.1);">по:</div>
<div style="left:750px;top:220px;width:26px;height:17px;border:1px solid #b4aa82;border-radius:4px;background:#fff"></div>
<div class="t" style="left:766.5px;top:223.19px;font-size:11px;font-weight:normal;color:#000;transform-origin:0 10.81px;transform:scaleY(1.1);">2</div>
<div style="left:23px;top:257px;width:11px;height:11px;border:1px solid #a49c7c;border-radius:2px;background:#fdfcf6"></div>
<svg style="position:absolute;left:25px;top:259px" width="9" height="9" viewBox="0 0 9 9"><path d="M1 4.5 L3.5 7.5 L8 1.5" stroke="#2a2a2a" stroke-width="1.6" fill="none"/></svg>
<div class="t" style="left:38.5px;top:256.84px;font-size:12px;font-weight:bold;color:#2b2006;transform-origin:0 11.16px;transform:scaleY(1.1);">Договоры</div>
<div class="t" style="left:619px;top:256.19px;font-size:11px;font-weight:normal;color:#2b2006;transform-origin:0 10.81px;transform:scaleY(1.1);">Оглавление с :</div>
<div style="left:700px;top:253px;width:26px;height:17px;border:1px solid #b4aa82;border-radius:4px;background:#fff"></div>
<div class="t" style="left:716.5px;top:256.19px;font-size:11px;font-weight:normal;color:#000;transform-origin:0 10.81px;transform:scaleY(1.1);">1</div>
<div class="t" style="left:731.5px;top:256.19px;font-size:11px;font-weight:normal;color:#2b2006;transform-origin:0 10.81px;transform:scaleY(1.1);">по:</div>
<div style="left:750px;top:253px;width:26px;height:17px;border:1px solid #b4aa82;border-radius:4px;background:#fff"></div>
<div class="t" style="left:766.5px;top:256.19px;font-size:11px;font-weight:normal;color:#000;transform-origin:0 10.81px;transform:scaleY(1.1);">2</div>
<div style="left:23px;top:289px;width:11px;height:11px;border:1px solid #a49c7c;border-radius:2px;background:#fdfcf6"></div>
<svg style="position:absolute;left:25px;top:291px" width="9" height="9" viewBox="0 0 9 9"><path d="M1 4.5 L3.5 7.5 L8 1.5" stroke="#2a2a2a" stroke-width="1.6" fill="none"/></svg>
<div class="t" style="left:38.5px;top:288.84px;font-size:12px;font-weight:bold;color:#2b2006;transform-origin:0 11.16px;transform:scaleY(1.1);">Инвойсы</div>
<div class="t" style="left:619px;top:288.19px;font-size:11px;font-weight:normal;color:#2b2006;transform-origin:0 10.81px;transform:scaleY(1.1);">Оглавление с :</div>
<div style="left:700px;top:285px;width:26px;height:17px;border:1px solid #b4aa82;border-radius:4px;background:#fff"></div>
<div class="t" style="left:716.5px;top:288.19px;font-size:11px;font-weight:normal;color:#000;transform-origin:0 10.81px;transform:scaleY(1.1);">1</div>
<div class="t" style="left:731.5px;top:288.19px;font-size:11px;font-weight:normal;color:#2b2006;transform-origin:0 10.81px;transform:scaleY(1.1);">по:</div>
<div style="left:750px;top:285px;width:26px;height:17px;border:1px solid #b4aa82;border-radius:4px;background:#fff"></div>
<div class="t" style="left:766.5px;top:288.19px;font-size:11px;font-weight:normal;color:#000;transform-origin:0 10.81px;transform:scaleY(1.1);">2</div>
<div style="left:127px;top:220px;width:206px;height:17px;border:1px solid #b4aa82;border-radius:3px;background:#fff"></div>
<div style="left:320px;top:221px;width:14px;height:17px;border-left:1px solid #d9d1b0;border-radius:0 2px 2px 0;background:linear-gradient(90deg,#f6f3e4,#ebe5cb)"></div>
<svg style="position:absolute;left:324px;top:227px" width="9" height="5" viewBox="0 0 9 5"><path d="M0 0 H9 L4.5 4.5 Z" fill="#5a4310"/></svg>
<div class="t" style="left:130.5px;top:223.19px;font-size:11px;font-weight:normal;color:#000;transform-origin:0 10.81px;transform:scaleY(1.1);">Контрагенты, Банк. счета</div>
<div style="left:127px;top:254px;width:206px;height:16px;border:1px solid #b4aa82;background:#fefaee"></div>
<div class="t" style="left:130px;top:257.19px;font-size:11px;font-weight:normal;color:#2b2006;transform-origin:0 10.81px;transform:scaleY(1.1);">Договор контрагента</div>
<div style="left:127px;top:285px;width:206px;height:17px;border:1px solid #b4aa82;border-radius:3px;background:#fff"></div>
<div style="left:320px;top:286px;width:14px;height:17px;border-left:1px solid #d9d1b0;border-radius:0 2px 2px 0;background:linear-gradient(90deg,#f6f3e4,#ebe5cb)"></div>
<svg style="position:absolute;left:324px;top:292px" width="9" height="5" viewBox="0 0 9 5"><path d="M0 0 H9 L4.5 4.5 Z" fill="#5a4310"/></svg>
<div class="t" style="left:130.5px;top:288.19px;font-size:11px;font-weight:normal;color:#000;transform-origin:0 10.81px;transform:scaleY(1.1);width:187.5px;overflow:hidden;letter-spacing:0.2px;white-space:nowrap">Реализация тов. и услуг, Счет-Факту</div>
<div style="left:364px;top:220px;width:204px;height:17px;border:1px solid #b4aa82;border-radius:3px;background:#fff"></div>
<div style="left:553px;top:221px;width:16px;height:17px;border-left:1px solid #d9d1b0;border-radius:0 2px 2px 0;background:linear-gradient(90deg,#f6f3e4,#ebe5cb)"></div>
<svg style="position:absolute;left:557px;top:227px" width="9" height="5" viewBox="0 0 9 5"><path d="M0 0 H9 L4.5 4.5 Z" fill="#5a4310"/></svg>
<div class="t" style="left:367.5px;top:223.19px;font-size:11px;font-weight:normal;color:#000;transform-origin:0 10.81px;transform:scaleY(1.1);">Успех, Ошибка, Совпадение</div>
<div style="left:364px;top:253px;width:204px;height:17px;border:1px solid #b4aa82;border-radius:3px;background:#fff"></div>
<div style="left:553px;top:254px;width:16px;height:17px;border-left:1px solid #d9d1b0;border-radius:0 2px 2px 0;background:linear-gradient(90deg,#f6f3e4,#ebe5cb)"></div>
<svg style="position:absolute;left:557px;top:260px" width="9" height="5" viewBox="0 0 9 5"><path d="M0 0 H9 L4.5 4.5 Z" fill="#5a4310"/></svg>
<div class="t" style="left:367.5px;top:256.19px;font-size:11px;font-weight:normal;color:#000;transform-origin:0 10.81px;transform:scaleY(1.1);">Успех, Ошибка, Совпадение</div>
<div style="left:364px;top:285px;width:204px;height:17px;border:1px solid #b4aa82;border-radius:3px;background:#fff"></div>
<div style="left:553px;top:286px;width:16px;height:17px;border-left:1px solid #d9d1b0;border-radius:0 2px 2px 0;background:linear-gradient(90deg,#f6f3e4,#ebe5cb)"></div>
<svg style="position:absolute;left:557px;top:292px" width="9" height="5" viewBox="0 0 9 5"><path d="M0 0 H9 L4.5 4.5 Z" fill="#5a4310"/></svg>
<div style="left:368px;top:288px;width:143px;height:13px;background:#4d66c6"></div>
<div style="left:367px;top:288px;width:1px;height:13px;background:#b8902a"></div>
<div class="t" style="left:367.5px;top:288.19px;font-size:11px;font-weight:normal;color:#ffffff;transform-origin:0 10.81px;transform:scaleY(1.1);z-index:2">Успех, Ошибка, Совпадение</div>
<div style="left:17px;top:338px;width:1405px;height:475px;border-left:1px solid #b4aa82;border-bottom:1px solid #b4aa82"></div>
<div style="left:17px;top:338px;width:1322px;height:1px;background:#b4aa82"></div>
<div style="left:1339px;top:338px;width:82px;height:4px;background:#fefaee"></div>
<div style="left:1422px;top:342px;width:1px;height:472px;background:#b4aa82"></div>
<div style="left:17px;top:320px;width:53px;height:18px;border:1px solid #b4aa82;border-bottom:none;border-radius:6px 6px 0 0;background:#fefaee;box-shadow:inset 0 1px 0 #f6c978,inset 0 2px 0 #fbe3b0;z-index:2"></div>
<div class="t" style="left:27px;top:323.19px;font-size:11px;font-weight:normal;color:#2b2006;transform-origin:0 10.81px;transform:scaleY(1.1);z-index:3">Общее</div>
<div style="left:78px;top:320px;width:62px;height:17px;border:1px solid #cbc4a4;border-bottom:none;border-radius:6px 6px 0 0;background:#ede7cf;z-index:2"></div>
<div class="t" style="left:87.5px;top:323.19px;font-size:11px;font-weight:normal;color:#2b2006;transform-origin:0 10.81px;transform:scaleY(1.1);z-index:3">Клиенты</div>
<div style="left:148px;top:320px;width:70px;height:17px;border:1px solid #cbc4a4;border-bottom:none;border-radius:6px 6px 0 0;background:#ede7cf;z-index:2"></div>
<div class="t" style="left:158px;top:323.19px;font-size:11px;font-weight:normal;color:#2b2006;transform-origin:0 10.81px;transform:scaleY(1.1);z-index:3">Договоры</div>
<div style="left:226px;top:320px;width:64px;height:17px;border:1px solid #cbc4a4;border-bottom:none;border-radius:6px 6px 0 0;background:#ede7cf;z-index:2"></div>
<div class="t" style="left:235.5px;top:323.19px;font-size:11px;font-weight:normal;color:#2b2006;transform-origin:0 10.81px;transform:scaleY(1.1);z-index:3">Инвойсы</div>
<div style="left:1218px;top:320px;width:82px;height:16px;border:1px solid #bfb68e;border-radius:4px;background:linear-gradient(#fdfcf5,#ece7cf)"></div>
<div class="t" style="left:1234px;top:323.19px;font-size:11px;font-weight:normal;color:#2b2006;transform-origin:0 10.81px;transform:scaleY(1.1);">Сохранить</div>
<svg style="position:absolute;left:1356px;top:319px" width="16" height="14" viewBox="0 0 16 14"><path d="M3 6 A5 5 0 0 1 12.5 4.5" stroke="#2a8a1a" stroke-width="1.6" fill="none"/><path d="M13 8 A5 5 0 0 1 3.5 9.5" stroke="#2a8a1a" stroke-width="1.6" fill="none"/><path d="M0.5 6.5 L3 3.5 L5.5 6.5 Z" fill="#2a8a1a"/><path d="M10.5 7.5 L13 10.5 L15.5 7.5 Z" fill="#2a8a1a"/></svg>
<svg style="position:absolute;left:1380px;top:320px" width="14" height="13" viewBox="0 0 14 13"><rect x="0" y="0" width="14" height="13" fill="#c4ccd2"/><rect x="0" y="0" width="14" height="1.5" fill="#9aa4ac"/><path d="M3 6 A4 4 0 0 1 10 5 M11 8 A4 4 0 0 1 4 8.5" stroke="#a8c8a0" stroke-width="1.2" fill="none"/><path d="M1 7 L3 4.5 L5 7 Z M9 7 L11 9.5 L13 7 Z" fill="#9ab890"/></svg>
<svg style="position:absolute;left:1404px;top:320px" width="11" height="11" viewBox="0 0 11 11"><path d="M1.5 1.5 L9.5 9.5 M9.5 1.5 L1.5 9.5" stroke="#9aa8b6" stroke-width="2.6"/></svg>
<div style="left:24px;top:345px;width:1390px;height:461px;border:1px solid #b4aa82;background:#fff"></div>
<div style="left:25px;top:346px;width:1374px;height:445px;background-image:linear-gradient(90deg,transparent 62px,#e4e4e4 62px),linear-gradient(transparent 14px,#e4e4e4 14px);background-size:63px 15px,63px 15px;background-position:0 0,0 0"></div>
<div style="left:1399px;top:346px;width:1px;height:445px;background:#b4aa82"></div>
<div style="left:1400px;top:346px;width:15px;height:445px;background:#f8f7f1"></div>
<div style="left:1400px;top:346px;width:15px;height:20px;background:linear-gradient(90deg,#fbfaf3,#eee9d2)"></div>
<div style="left:1400px;top:366px;width:15px;height:1px;background:#b4aa82"></div>
<svg style="position:absolute;left:1403px;top:351px" width="9" height="7" viewBox="0 0 9 7"><path d="M0 6 L4.5 0 L9 6 Z" fill="#d6d2c2"/></svg>
<div style="left:1400px;top:367px;width:15px;height:328px;background:linear-gradient(90deg,#f8f6ea,#efe9cf 40%,#e6dfc0)"></div>
<div style="left:1400px;top:695px;width:15px;height:1px;background:#b4aa82"></div>
<div style="left:1400px;top:770px;width:15px;height:1px;background:#b4aa82"></div>
<div style="left:1400px;top:771px;width:15px;height:20px;background:linear-gradient(90deg,#fbfaf3,#eee9d2)"></div>
<svg style="position:absolute;left:1403px;top:777px" width="9" height="7" viewBox="0 0 9 7"><path d="M0 0 L9 0 L4.5 6 Z" fill="#8a8a92"/></svg>
<svg style="position:absolute;left:1404px;top:527px" width="6" height="6" viewBox="0 0 6 6"><circle cx="3" cy="3" r="1.5" fill="#c8c0a0"/></svg>
<div style="left:25px;top:791px;width:1390px;height:1px;background:#b4aa82"></div>
<div style="left:25px;top:792px;width:1390px;height:15px;background:#f8f7f1"></div>
<div style="left:25px;top:792px;width:20px;height:15px;background:linear-gradient(#fbfaf3,#eee9d2)"></div>
<div style="left:45px;top:792px;width:1px;height:15px;background:#b4aa82"></div>
<svg style="position:absolute;left:30px;top:795px" width="7" height="9" viewBox="0 0 7 9"><path d="M6 0 L6 9 L0 4.5 Z" fill="#d6d2c2"/></svg>
<div style="left:46px;top:792px;width:1241px;height:15px;background:linear-gradient(#f8f6ea,#efe9cf 50%,#e3dcbc)"></div>
<div style="left:1287px;top:792px;width:1px;height:15px;background:#b4aa82"></div>
<div style="left:1378px;top:792px;width:1px;height:15px;background:#b4aa82"></div>
<div style="left:1379px;top:792px;width:20px;height:15px;background:linear-gradient(#fbfaf3,#eee9d2)"></div>
<svg style="position:absolute;left:1386px;top:795px" width="7" height="9" viewBox="0 0 7 9"><path d="M0 0 L7 4.5 L0 9 Z" fill="#8a8a92"/></svg>
<div style="left:1399px;top:792px;width:1px;height:15px;background:#b4aa82"></div>
<svg style="position:absolute;left:663px;top:796px" width="6" height="6" viewBox="0 0 6 6"><circle cx="3" cy="3" r="1.5" fill="#c8c0a0"/></svg>
<div style="left:364px;top:304px;width:211px;height:76px;border:1px solid #b4aa82;background:#fff;z-index:5"></div>
<div style="left:365px;top:343px;width:211px;height:19px;background:#6c99cf;z-index:6"></div>
<div class="t" style="left:369.5px;top:308.19px;font-size:11px;font-weight:normal;color:#000;transform-origin:0 10.81px;transform:scaleY(1.1);z-index:7">Успех, Ошибка, Совпадение</div>
<div class="t" style="left:369.5px;top:327.19px;font-size:11px;font-weight:normal;color:#000;transform-origin:0 10.81px;transform:scaleY(1.1);z-index:7">Успех</div>
<div class="t" style="left:369.5px;top:346.19px;font-size:11px;font-weight:normal;color:#fff;transform-origin:0 10.81px;transform:scaleY(1.1);z-index:7">Ошибка</div>
<div class="t" style="left:369.5px;top:365.19px;font-size:11px;font-weight:normal;color:#000;transform-origin:0 10.81px;transform:scaleY(1.1);z-index:7">Совпадение</div>
<div style="left:0px;top:855px;width:1439px;height:1px;background:#d6d6d6"></div>
<div style="left:0px;top:856px;width:1439px;height:1px;background:#ffffff"></div>
<div style="left:1px;top:858px;width:170px;height:18px;border:1px solid #bcae84;background:#b4b4b4"></div>
<svg style="position:absolute;left:3px;top:859px" width="17" height="17" viewBox="0 0 17 17"><rect x="1" y="1" width="4" height="14" fill="#3b7be0"/><rect x="2" y="3" width="2" height="9" fill="#d8f2ff"/><rect x="6" y="1" width="4" height="14" fill="#3b7be0"/><rect x="7" y="3" width="2" height="9" fill="#d8f2ff"/><rect x="11" y="1" width="4" height="13" fill="#3b7be0"/><rect x="12" y="3" width="2" height="9" fill="#d8f2ff"/><path d="M2 4.5 H4 M12 4.5 H14" stroke="#e07040" stroke-width="0.9"/><circle cx="9" cy="9" r="3.8" fill="#d0ecff" stroke="#b8782a" stroke-width="1.3"/><path d="M9.3 6 V11.5" stroke="#8ab8e8" stroke-width="0.8"/><path d="M12 12 L15.2 15.2" stroke="#e08a30" stroke-width="2.2"/></svg>
<div class="t" style="left:20.5px;top:861.19px;font-size:11px;font-weight:normal;color:#111;transform-origin:0 10.81px;transform:scaleY(1.1);">Панель функций</div>
<div style="left:174px;top:858px;width:170px;height:18px;border:1px solid #bcae84;background:#b4b4b4"></div>
<svg style="position:absolute;left:176px;top:860px" width="16" height="16" viewBox="0 0 16 16"><defs><linearGradient id="pbg" x1="0" y1="0" x2="0" y2="1"><stop offset="0" stop-color="#e4f8ff"/><stop offset="1" stop-color="#88c4ea"/></linearGradient><linearGradient id="pdg" x1="0" y1="0" x2="1" y2="1"><stop offset="0" stop-color="#fffbb0"/><stop offset="0.5" stop-color="#f8e030"/><stop offset="1" stop-color="#e8c020"/></linearGradient></defs><rect x="0.5" y="8.5" width="9" height="6" rx="2" fill="url(#pbg)" stroke="#3f6f95"/><path d="M4.5 4 V10" stroke="#000" stroke-width="1.1" stroke-dasharray="1.1 0.9"/><path d="M5 4.5 H8" stroke="#000" stroke-width="1.1" stroke-dasharray="1.1 0.9"/><path d="M2.3 10.2 H6.7 L4.5 12.6 Z" fill="#000"/><path d="M11 0.8 L14.7 4.5 L11 8.2 L7.3 4.5 Z" fill="url(#pdg)" stroke="#d8b030" stroke-width="0.6"/></svg>
<div class="t" style="left:193px;top:861.19px;font-size:11px;font-weight:normal;color:#111;transform-origin:0 10.81px;transform:scaleY(1.1);">Информация</div>
<div style="left:347px;top:858px;width:170px;height:18px;border:1px solid #bcae84;background:#b4b4b4"></div>
<svg style="position:absolute;left:349px;top:860px" width="16" height="16" viewBox="0 0 16 16"><defs><linearGradient id="pbg" x1="0" y1="0" x2="0" y2="1"><stop offset="0" stop-color="#e4f8ff"/><stop offset="1" stop-color="#88c4ea"/></linearGradient><linearGradient id="pdg" x1="0" y1="0" x2="1" y2="1"><stop offset="0" stop-color="#fffbb0"/><stop offset="0.5" stop-color="#f8e030"/><stop offset="1" stop-color="#e8c020"/></linearGradient></defs><rect x="0.5" y="8.5" width="9" height="6" rx="2" fill="url(#pbg)" stroke="#3f6f95"/><path d="M4.5 4 V10" stroke="#000" stroke-width="1.1" stroke-dasharray="1.1 0.9"/><path d="M5 4.5 H8" stroke="#000" stroke-width="1.1" stroke-dasharray="1.1 0.9"/><path d="M2.3 10.2 H6.7 L4.5 12.6 Z" fill="#000"/><path d="M11 0.8 L14.7 4.5 L11 8.2 L7.3 4.5 Z" fill="url(#pdg)" stroke="#d8b030" stroke-width="0.6"/></svg>
<div class="t" style="left:366px;top:861.19px;font-size:11px;font-weight:normal;color:#111;transform-origin:0 10.81px;transform:scaleY(1.1);">Переход на редакцию 3.0</div>
<div style="left:520px;top:858px;width:170px;height:18px;border:1px solid #bcae84;background:#b4b4b4"></div>
<svg style="position:absolute;left:522px;top:860px" width="16" height="16" viewBox="0 0 16 16"><rect x="1.5" y="2.5" width="4" height="12" rx="0.8" fill="#f4fbff" stroke="#6a7c8c"/><rect x="5.5" y="2.5" width="4" height="12" rx="0.8" fill="#f4fbff" stroke="#6a7c8c"/><rect x="9.5" y="2.5" width="4" height="12" rx="0.8" fill="#f4fbff" stroke="#6a7c8c"/><rect x="2" y="3" width="3" height="2.2" fill="#f5cf10"/><rect x="6" y="3" width="3" height="2.2" fill="#f5cf10"/><rect x="10" y="3" width="3" height="2.2" fill="#f5cf10"/></svg>
<div class="t" style="left:540px;top:861.19px;font-size:11px;font-weight:normal;color:#111;transform-origin:0 10.81px;transform:scaleY(1.1);">Дополнительные внешние ...</div>
<div style="left:693px;top:858px;width:170px;height:18px;border:1px solid #bcae84;background:#b9cfe6"></div>
<svg style="position:absolute;left:695px;top:860px" width="16" height="16" viewBox="0 0 16 16"><defs><linearGradient id="pbg" x1="0" y1="0" x2="0" y2="1"><stop offset="0" stop-color="#e4f8ff"/><stop offset="1" stop-color="#88c4ea"/></linearGradient><linearGradient id="pdg" x1="0" y1="0" x2="1" y2="1"><stop offset="0" stop-color="#fffbb0"/><stop offset="0.5" stop-color="#f8e030"/><stop offset="1" stop-color="#e8c020"/></linearGradient></defs><rect x="0.5" y="8.5" width="9" height="6" rx="2" fill="url(#pbg)" stroke="#3f6f95"/><path d="M4.5 4 V10" stroke="#000" stroke-width="1.1" stroke-dasharray="1.1 0.9"/><path d="M5 4.5 H8" stroke="#000" stroke-width="1.1" stroke-dasharray="1.1 0.9"/><path d="M2.3 10.2 H6.7 L4.5 12.6 Z" fill="#000"/><path d="M11 0.8 L14.7 4.5 L11 8.2 L7.3 4.5 Z" fill="url(#pdg)" stroke="#d8b030" stroke-width="0.6"/></svg>
<div class="t" style="left:712px;top:861.19px;font-size:11px;font-weight:normal;color:#111;transform-origin:0 10.81px;transform:scaleY(1.1);">Обработка&nbsp; Импорт данных...</div>
<div style="left:0px;top:880px;width:1365px;height:18px;border:1px solid #ddd6ba;border-bottom:none;border-left:none"></div>
<div style="left:1372px;top:880px;width:27px;height:18px;border:1px solid #ddd6ba;border-bottom:none"></div>
<div style="left:1406px;top:880px;width:32px;height:18px;border:1px solid #ddd6ba;border-bottom:none"></div>
<div class="t" style="left:5px;top:883.19px;font-size:11px;font-weight:normal;color:#2b2006;transform-origin:0 10.81px;transform:scaleY(1.1);">Для получения подсказки нажмите F1</div>
<div class="t" style="left:1375px;top:883.19px;font-size:11px;font-weight:normal;color:#a88a4a;transform-origin:0 10.81px;transform:scaleY(1.1);">CAP</div>
<div class="t" style="left:1409px;top:883.19px;font-size:11px;font-weight:normal;color:#2b2006;transform-origin:0 10.81px;transform:scaleY(1.1);">NUM</div>
<div style="left:0px;top:898px;width:1440px;height:1px;background:#3a4450"></div>
<div style="left:0px;top:899px;width:1440px;height:1px;background:#b8c8dc"></div>
</body></html>
